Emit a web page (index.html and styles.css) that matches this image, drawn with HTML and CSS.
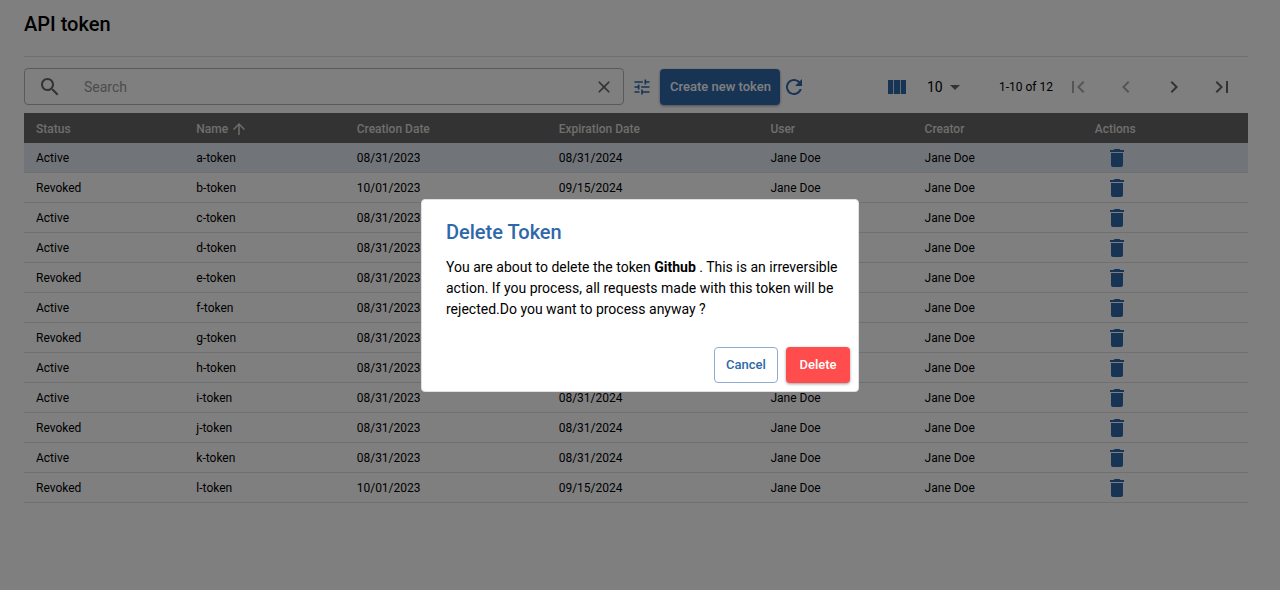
FILE: index.html
```html
<!DOCTYPE html>
<html lang="en">
<head>
<meta charset="utf-8">
<meta name="viewport" content="width=device-width, initial-scale=1">
<title>API token</title>
<link rel="stylesheet" href="styles.css">
</head>
<body>
<svg class="sprite" aria-hidden="true">
  <symbol id="trash" viewBox="0 0 24 24"><path d="M6 19c0 1.100.9 2 2 2h8c1.100 0 2-.9 2-2V7H6v12zM19 4h-3.500l-1-1h-5l-1 1H5v2h14V4z"/></symbol>
</svg>
<main class="page">
  <h1 class="page-title">API token</h1>
  <div class="toolbar">
    <div class="search">
      <svg class="icon" viewBox="0 0 24 24"><path d="M15.500 14h-.79l-.28-.27C15.410 12.590 16 11.110 16 9.500 16 5.910 13.090 3 9.500 3S3 5.910 3 9.500 5.910 16 9.500 16c1.610 0 3.090-.59 4.230-1.570l.27.28v.79l5 4.990L20.490 19l-4.990-5zm-6 0C7.010 14 5 11.990 5 9.500S7.010 5 9.500 5 14 7.010 14 9.500 11.990 14 9.500 14z"/></svg>
      <input class="search-input" type="text" placeholder="Search" aria-label="Search">
      <button class="icon-button" type="button" aria-label="Clear search"><svg class="icon icon-medium" viewBox="0 0 24 24"><path d="M19 6.410 17.590 5 12 10.590 6.410 5 5 6.410 10.590 12 5 17.590 6.410 19 12 13.410 17.590 19 19 17.590 13.410 12z"/></svg></button>
    </div>
    <button class="icon-button blue filter" type="button" aria-label="Filters"><svg class="icon icon-medium" viewBox="0 0 24 24"><path d="M3 17v2h6v-2H3zM3 5v2h10V5H3zm10 16v-2h8v-2h-8v-2h-2v6h2zM7 9v2H3v2h4v2h2V9H7zm14 4v-2H11v2h10zm-6-4h2V7h4V5h-4V3h-2v6z"/></svg></button>
    <button class="button primary" type="button">Create new token</button>
    <button class="icon-button blue refresh" type="button" aria-label="Refresh"><svg class="icon" viewBox="0 0 24 24"><path d="M17.650 6.350C16.200 4.900 14.210 4 12 4c-4.420 0-7.990 3.580-7.990 8s3.570 8 7.990 8c3.730 0 6.840-2.550 7.730-6h-2.080c-.82 2.330-3.040 4-5.650 4-3.310 0-6-2.690-6-6s2.690-6 6-6c1.660 0 3.140.69 4.220 1.780L13 11h7V4l-2.350 2.350z"/></svg></button>
    <div class="pagination">
      <button class="icon-button blue" type="button" aria-label="Columns"><svg class="icon" viewBox="0 0 24 24"><path d="M3 5h5v14H3zM9 5h6v14H9zM16 5h5v14h-5z"/><path opacity=".5" d="M8 5h.5v14H8zM15.500 5h.5v14h-.5z"/></svg></button>
      <div class="page-size">
        <select class="page-size-select" aria-label="Rows per page"><option>10</option><option>20</option><option>50</option></select>
        <svg class="icon page-size-arrow" viewBox="0 0 24 24"><path d="m7 10 5 5 5-5z"/></svg>
      </div>
      <span class="range">1-10 of 12</span>
      <div class="pager">
        <button class="icon-button" type="button" aria-label="First page" disabled><svg class="icon" viewBox="0 0 24 24"><path d="M18.410 16.590 13.820 12l4.590-4.590L17 6l-6 6 6 6zM6 6h2v12H6z"/></svg></button>
        <button class="icon-button" type="button" aria-label="Previous page" disabled><svg class="icon" viewBox="0 0 24 24"><path d="M15.410 7.410 14 6l-6 6 6 6 1.410-1.410L10.830 12z"/></svg></button>
        <button class="icon-button" type="button" aria-label="Next page"><svg class="icon" viewBox="0 0 24 24"><path d="M8.590 16.590 13.170 12 8.590 7.410 10 6l6 6-6 6z"/></svg></button>
        <button class="icon-button" type="button" aria-label="Last page"><svg class="icon" viewBox="0 0 24 24"><path d="M5.590 7.410 10.180 12l-4.590 4.590L7 18l6-6-6-6zM16 6h2v12h-2z"/></svg></button>
      </div>
    </div>
  </div>
  <table class="tokens">
    <colgroup><col class="col-status"><col class="col-name"><col class="col-created"><col class="col-expires"><col class="col-user"><col class="col-creator"><col class="col-actions"></colgroup>
    <thead>
      <tr><th>Status</th><th><span class="sorted">Name<svg class="icon icon-small" viewBox="0 0 24 24"><path d="m4 12 1.410 1.410L11 7.830V20h2V7.830l5.580 5.590L20 12l-8-8-8 8z"/></svg></span></th><th>Creation Date</th><th>Expiration Date</th><th>User</th><th>Creator</th><th>Actions</th></tr>
    </thead>
    <tbody>
      <tr class="selected"><td>Active</td><td>a-token</td><td>08/31/2023</td><td>08/31/2024</td><td>Jane Doe</td><td>Jane Doe</td><td><button class="icon-button blue delete" type="button" aria-label="Delete a-token"><svg class="icon"><use href="#trash"/></svg></button></td></tr>
      <tr><td>Revoked</td><td>b-token</td><td>10/01/2023</td><td>09/15/2024</td><td>Jane Doe</td><td>Jane Doe</td><td><button class="icon-button blue delete" type="button" aria-label="Delete b-token"><svg class="icon"><use href="#trash"/></svg></button></td></tr>
      <tr><td>Active</td><td>c-token</td><td>08/31/2023</td><td>08/31/2024</td><td>Jane Doe</td><td>Jane Doe</td><td><button class="icon-button blue delete" type="button" aria-label="Delete c-token"><svg class="icon"><use href="#trash"/></svg></button></td></tr>
      <tr><td>Active</td><td>d-token</td><td>08/31/2023</td><td>08/31/2024</td><td>Jane Doe</td><td>Jane Doe</td><td><button class="icon-button blue delete" type="button" aria-label="Delete d-token"><svg class="icon"><use href="#trash"/></svg></button></td></tr>
      <tr><td>Revoked</td><td>e-token</td><td>08/31/2023</td><td>08/31/2024</td><td>Jane Doe</td><td>Jane Doe</td><td><button class="icon-button blue delete" type="button" aria-label="Delete e-token"><svg class="icon"><use href="#trash"/></svg></button></td></tr>
      <tr><td>Active</td><td>f-token</td><td>08/31/2023</td><td>08/31/2024</td><td>Jane Doe</td><td>Jane Doe</td><td><button class="icon-button blue delete" type="button" aria-label="Delete f-token"><svg class="icon"><use href="#trash"/></svg></button></td></tr>
      <tr><td>Revoked</td><td>g-token</td><td>08/31/2023</td><td>08/31/2024</td><td>Jane Doe</td><td>Jane Doe</td><td><button class="icon-button blue delete" type="button" aria-label="Delete g-token"><svg class="icon"><use href="#trash"/></svg></button></td></tr>
      <tr><td>Active</td><td>h-token</td><td>08/31/2023</td><td>08/31/2024</td><td>Jane Doe</td><td>Jane Doe</td><td><button class="icon-button blue delete" type="button" aria-label="Delete h-token"><svg class="icon"><use href="#trash"/></svg></button></td></tr>
      <tr><td>Active</td><td>i-token</td><td>08/31/2023</td><td>08/31/2024</td><td>Jane Doe</td><td>Jane Doe</td><td><button class="icon-button blue delete" type="button" aria-label="Delete i-token"><svg class="icon"><use href="#trash"/></svg></button></td></tr>
      <tr><td>Revoked</td><td>j-token</td><td>08/31/2023</td><td>08/31/2024</td><td>Jane Doe</td><td>Jane Doe</td><td><button class="icon-button blue delete" type="button" aria-label="Delete j-token"><svg class="icon"><use href="#trash"/></svg></button></td></tr>
      <tr><td>Active</td><td>k-token</td><td>08/31/2023</td><td>08/31/2024</td><td>Jane Doe</td><td>Jane Doe</td><td><button class="icon-button blue delete" type="button" aria-label="Delete k-token"><svg class="icon"><use href="#trash"/></svg></button></td></tr>
      <tr><td>Revoked</td><td>l-token</td><td>10/01/2023</td><td>09/15/2024</td><td>Jane Doe</td><td>Jane Doe</td><td><button class="icon-button blue delete" type="button" aria-label="Delete l-token"><svg class="icon"><use href="#trash"/></svg></button></td></tr>
    </tbody>
  </table>
</main>
<div class="overlay">
  <div class="dialog" role="dialog" aria-modal="true" aria-labelledby="dialog-title">
    <h2 class="dialog-title" id="dialog-title">Delete Token</h2>
    <p class="dialog-text">You are about to delete the token <strong>Github</strong> . This is an irreversible action. If you process, all requests made with this token will be rejected.Do you want to process anyway ?</p>
    <div class="dialog-actions">
      <button class="button outlined" type="button">Cancel</button>
      <button class="button danger" type="button">Delete</button>
    </div>
  </div>
</div>
</body>
</html>
```
FILE: styles.css
```css
* {
  box-sizing: border-box;
}

body {
  margin: 0;
  background: #fff;
  color: #000;
  font-family: Roboto, "Liberation Sans", sans-serif;
  font-size: 14px;
}

button,
input,
select {
  font: inherit;
  color: inherit;
}

.sprite {
  display: none;
}

.page {
  padding: 0 32px 0 24px;
}

.page-title {
  margin: 0 0 11px;
  padding: 12px 0 20px;
  border-bottom: 1px solid #e0e0e0;
  font-size: 20px;
  line-height: 24px;
  font-weight: 500;
}

.icon {
  display: block;
  flex: none;
  width: 24px;
  height: 24px;
  fill: currentColor;
}

.icon-medium {
  width: 20px;
  height: 20px;
}

.icon-small {
  width: 18px;
  height: 18px;
}

.icon-button {
  display: flex;
  align-items: center;
  justify-content: center;
  padding: 0;
  border: 0;
  background: none;
  color: #666;
}

.icon-button:disabled {
  color: #aaa;
}

.icon-button.blue {
  color: #2e68aa;
}

.toolbar {
  display: flex;
  align-items: center;
  height: 37px;
  margin-bottom: 8px;
}

.search {
  display: flex;
  align-items: center;
  flex: 0 1 600px;
  height: 37px;
  padding: 0 9px 0 13px;
  border: 1px solid #b5b5b5;
  border-radius: 4px;
  color: #666;
}

.search-input {
  flex: 1;
  min-width: 0;
  margin-left: 22px;
  padding: 0;
  border: 0;
  outline: 0;
  background: none;
}

.search-input::placeholder {
  color: #999;
  opacity: 1;
}

.filter {
  margin: 0 8px;
}

.refresh {
  margin-left: 2px;
}

.button {
  height: 36px;
  padding: 0 10px;
  border: 0;
  border-radius: 4px;
  font-size: 13px;
  font-weight: 500;
  white-space: nowrap;
}

.primary {
  width: 120px;
  background: #2e68aa;
  color: #fff;
  box-shadow: 0 1px 3px rgba(0, 0, 0, 0.4);
}

.pagination {
  display: flex;
  align-items: center;
  margin-left: auto;
}

.page-size {
  display: grid;
  align-items: center;
  justify-items: end;
  margin: 0 32px 0 18px;
}

.page-size-select {
  grid-area: 1 / 1;
  width: 40px;
  height: 24px;
  padding: 0;
  border: 0;
  appearance: none;
  background: none;
}

.page-size-arrow {
  grid-area: 1 / 1;
  color: #666;
  pointer-events: none;
}

.range {
  font-size: 12px;
}

.pager {
  display: flex;
  gap: 24px;
  padding: 0 14px 0 13px;
}

.tokens {
  width: 100%;
  border-collapse: separate;
  border-spacing: 0;
  table-layout: fixed;
  font-size: 12px;
}

.tokens th,
.tokens td {
  height: 30px;
  padding: 1px 12px 0;
  text-align: left;
  white-space: nowrap;
}

.tokens th {
  padding-top: 2px;
  background: #666;
  color: #ddd;
  font-weight: 500;
}

.tokens td {
  border-bottom: 1px solid #e0e0e0;
}

.selected td {
  background: #e3ebf4;
}

.col-status,
.col-name {
  width: 13.100%;
}

.col-created {
  width: 16.500%;
}

.col-expires {
  width: 17.300%;
}

.col-user {
  width: 12.600%;
}

.col-creator {
  width: 13.900%;
}

.sorted {
  display: flex;
  align-items: center;
  gap: 2px;
}

.delete {
  margin-left: 10px;
}

.overlay {
  position: fixed;
  inset: 0;
  display: flex;
  align-items: center;
  justify-content: center;
  background: rgba(0, 0, 0, 0.5);
}

.dialog {
  width: 438px;
  max-width: 100%;
  padding: 20px 8px 8px 24px;
  border: 1px solid #e0e0e0;
  border-radius: 4px;
  background: #fff;
}

.dialog-title {
  margin: 0 0 13px;
  color: #2e68aa;
  font-size: 20px;
  line-height: 24px;
  font-weight: 500;
}

.dialog-text {
  margin: 0 8px 27px 0;
  line-height: 21px;
}

.dialog-actions {
  display: flex;
  justify-content: flex-end;
  gap: 8px;
}

.dialog-actions .button {
  width: 64px;
}

.outlined {
  border: 1px solid #8facd2;
  background: #fff;
  color: #2e68aa;
}

.danger {
  background: #ff4c4c;
  color: #fff;
  box-shadow: 0 1px 3px rgba(0, 0, 0, 0.4);
}
```
